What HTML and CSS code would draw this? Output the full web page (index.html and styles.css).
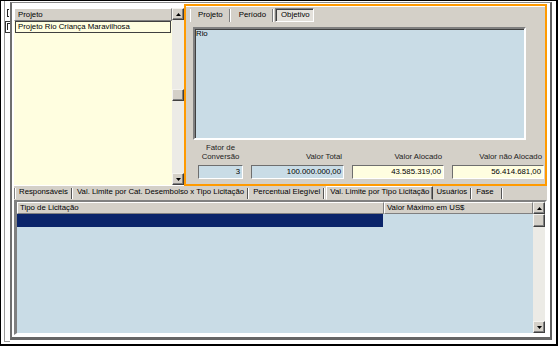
FILE: index.html
```html
<!DOCTYPE html>
<html lang="pt-BR">
<head>
    <meta charset="UTF-8">
    <meta name="viewport" content="width=device-width, initial-scale=1.0">
    <title>Projeto</title>
    <link rel="stylesheet" href="styles.css">
</head>
<body>
    <div class="screen">
        <!-- list that sits behind the main frame, only its edge shows -->
        <div class="ghost">
            <div class="ghost-head"><span class="ghost-mark"></span></div>
            <div class="ghost-row"><span class="ghost-mark small"></span></div>
        </div>

        <div class="frame">
            <div class="top">
                <div class="list">
                    <div class="list-body">
                        <div class="col-head">Projeto</div>
                        <div class="list-row">Projeto Rio Criança Maravilhosa</div>
                    </div>
                    <div class="vscroll">
                        <div class="sb-btn"><svg width="5" height="3" viewBox="0 0 5 3"><polygon points="0,3 2.5,0 5,3" fill="#000"/></svg></div>
                        <div class="sb-gap"></div>
                        <div class="sb-thumb"></div>
                        <div class="sb-fill"></div>
                        <div class="sb-btn"><svg width="5" height="3" viewBox="0 0 5 3"><polygon points="0,0 5,0 2.5,3" fill="#000"/></svg></div>
                    </div>
                </div>

                <div class="orange">
                    <div class="tabs-top">
                        <div class="ttab first">Projeto</div>
                        <div class="ttab">Período</div>
                        <div class="ttab active">Objetivo</div>
                    </div>
                    <div class="memo">Rio</div>
                    <div class="values">
                        <div class="lbl center">Fator de<br>Conversão</div>
                        <div class="lbl">Valor Total</div>
                        <div class="lbl">Valor Alocado</div>
                        <div class="lbl">Valor não Alocado</div>
                        <div class="field blue">3</div>
                        <div class="field blue">100.000.000,00</div>
                        <div class="field yellow">43.585.319,00</div>
                        <div class="field yellow">56.414.681,00</div>
                    </div>
                </div>
            </div>

            <div class="bottom">
                <div class="tabs-bottom">
                    <div class="btab first">Responsáveis</div>
                    <div class="btab">Val. Limite por Cat. Desembolso x Tipo Licitação</div>
                    <div class="btab">Percentual Elegível</div>
                    <div class="btab active">Val. Limite por Tipo Licitação</div>
                    <div class="btab after">Usuários</div>
                    <div class="btab last">Fase</div>
                </div>
                <div class="grid">
                    <div class="table">
                        <div class="thead">
                            <div class="th th1">Tipo de Licitação</div>
                            <div class="th th2">Valor Máximo em US$</div>
                        </div>
                        <div class="trow">
                            <div class="td td1 selected"></div>
                            <div class="td td2"></div>
                        </div>
                    </div>
                    <div class="vscroll">
                        <div class="sb-btn"><svg width="5" height="3" viewBox="0 0 5 3"><polygon points="0,3 2.5,0 5,3" fill="#000"/></svg></div>
                        <div class="sb-thumb tall"></div>
                        <div class="sb-fill"></div>
                        <div class="sb-btn"><svg width="5" height="3" viewBox="0 0 5 3"><polygon points="0,0 5,0 2.5,3" fill="#000"/></svg></div>
                    </div>
                </div>
            </div>
        </div>
    </div>
</body>
</html>
```

FILE: styles.css
```css
* {
    box-sizing: border-box;
}
body {
    margin: 0;
    background-color: #fff;
    font-family: "Liberation Sans", Arial, sans-serif;
    font-size: 7.8px;
    color: #000;
}
.screen {
    width: 558px;
    height: 346px;
    display: flex;
    background-color: #fff;
    border: 1px solid #000;
    border-right-width: 2px;
    border-bottom-width: 2px;
}

/* hidden list on the left, only its edge shows */
.ghost {
    width: 6px;
    margin: 0 0 2px 3px;
    padding-top: 7px;
    border-left: 1px solid #9a9a9a;
    border-bottom: 1px solid #9a9a9a;
    overflow: hidden;
}
.ghost-head {
    height: 13px;
    padding: 1px 0 0 2px;
}
.ghost-row {
    height: 12px;
    padding: 1px 0 0 1px;
    border: 1px solid #333;
    border-right: 0;
}
.ghost-mark {
    display: block;
    width: 2px;
    height: 8px;
    border: 1px solid #222;
    border-right: 0;
}
.ghost-mark.small {
    width: 3px;
    height: 7px;
    border-bottom: 0;
}

.frame {
    width: 542px;
    margin: 1px 4px 4px 0;
    padding: 0 3px 2px 2px;
    border-top: 1px solid #8a8a8a;
    border-left: 2px solid #6f6f6f;
    border-right: 2px solid #606060;
    border-bottom: 3px solid #666;
    display: flex;
    flex-direction: column;
}
.top {
    height: 183px;
    display: flex;
}

/* project list */
.list {
    width: 170px;
    height: 177px;
    margin-top: 5px;
    display: flex;
}
.list-body {
    flex: 1;
    background-color: #fffee0;
}
.col-head {
    height: 13px;
    line-height: 11px;
    padding-left: 3px;
    background-color: #d4d0c8;
    border: 1px solid;
    border-color: #fff #808080 #808080 #fff;
}
.list-row {
    height: 12px;
    margin: 0 1px;
    padding-left: 2px;
    line-height: 10px;
    border: 1px solid #404040;
    white-space: nowrap;
}

/* scrollbars */
.vscroll {
    width: 12px;
    display: flex;
    flex-direction: column;
    background-color: #ecebe6;
}
.sb-btn,
.sb-thumb {
    height: 12px;
    flex-shrink: 0;
    background-color: #d4d0c8;
    border: 1px solid;
    border-color: #f4f3ef #404040 #404040 #f4f3ef;
    box-shadow: inset -1px -1px #808080;
    display: flex;
    align-items: center;
    justify-content: center;
}
.sb-btn svg {
    display: block;
}
.sb-gap {
    height: 69px;
}
.sb-thumb.tall {
    height: 13px;
}
.sb-fill {
    flex: 1;
}

/* orange framed detail panel */
.orange {
    flex: 1;
    margin-top: 1px;
    border: 2px solid #ff9a00;
    background-color: #d4d0c8;
    box-shadow: inset 0 1px #fff;
    display: flex;
    flex-direction: column;
}
.tabs-top {
    height: 15px;
    margin: 2px 0 0 4px;
    display: flex;
}
.ttab {
    height: 13px;
    margin-top: 1px;
    margin-right: 2px;
    padding: 0 6px 0 7px;
    line-height: 11px;
    border-right: 1px solid #808080;
    box-shadow: 1px 0 #fff;
}
.ttab.first {
    border-left: 1px solid #fff;
}
.ttab.active {
    height: 14px;
    margin-top: 0;
    padding: 0 3px 0 5px;
    line-height: 12px;
    border: 1px solid;
    border-color: #808080 #fff #fff #808080;
    box-shadow: inset 1px 1px #404040;
    background-color: #e4e1db;
}
.memo {
    height: 113px;
    margin: 4px 19px 0 7px;
    padding: 0 1px;
    line-height: 10px;
    background-color: #c9dce6;
    border: 2px solid;
    border-color: #808080 #fff #fff #808080;
    box-shadow: inset 1px 1px #404040;
}
.values {
    margin: 3px 0 0 12px;
    display: grid;
    grid-template-columns: 45px 93px 92px 92px;
    column-gap: 8px;
}
.lbl {
    align-self: end;
    line-height: 9px;
    text-align: right;
    padding-right: 2px;
    color: #222;
}
.lbl.center {
    text-align: center;
    padding-right: 0;
}
.field {
    height: 14px;
    margin-top: 4px;
    padding-right: 2px;
    line-height: 11px;
    text-align: right;
    border: 1px solid;
    border-color: #6e6e6e #fff #fff #6e6e6e;
}
.field.blue {
    background-color: #c9dce6;
}
.field.yellow {
    background-color: #fffee0;
}

/* bottom page control */
.bottom {
    flex: 1;
    display: flex;
    flex-direction: column;
    background-color: #d4d0c8;
}
.tabs-bottom {
    height: 14px;
    display: flex;
}
.btab {
    height: 11px;
    margin-top: 2px;
    padding: 0 3px 0 5px;
    line-height: 7px;
    border-right: 1px solid #555;
    box-shadow: 1px 0 #fff;
    white-space: nowrap;
}
.btab.first {
    border-left: 1px solid #808080;
    box-shadow: inset 1px 0 #fff, 1px 0 #fff;
    padding-left: 4px;
}
.btab.active {
    height: 14px;
    margin: 0 0 0 2px;
    padding: 0 3px;
    line-height: 9px;
    border: 1px solid;
    border-color: #fff #404040 transparent #fff;
    box-shadow: inset -1px 0 #808080;
}
.btab.after {
    padding-left: 3px;
}
.btab.last {
    padding-right: 7px;
}
.grid {
    flex: 1;
    display: flex;
    background-color: #c9dce6;
    border-style: solid;
    border-width: 2px 2px 2px 3px;
    border-color: #808080 #fff #fff #808080;
}
.table {
    flex: 1;
}
.thead,
.trow {
    display: flex;
}
.th {
    height: 12px;
    padding-left: 2px;
    line-height: 10px;
    background-color: #d4d0c8;
    border: 1px solid;
    border-color: #fff #808080 #808080 #fff;
}
.th1 {
    width: 367px;
}
.th2 {
    flex: 1;
}
.td {
    height: 13px;
}
.td1 {
    width: 366px;
}
.td2 {
    flex: 1;
}
.td.selected {
    background-color: #0a246a;
}
```
